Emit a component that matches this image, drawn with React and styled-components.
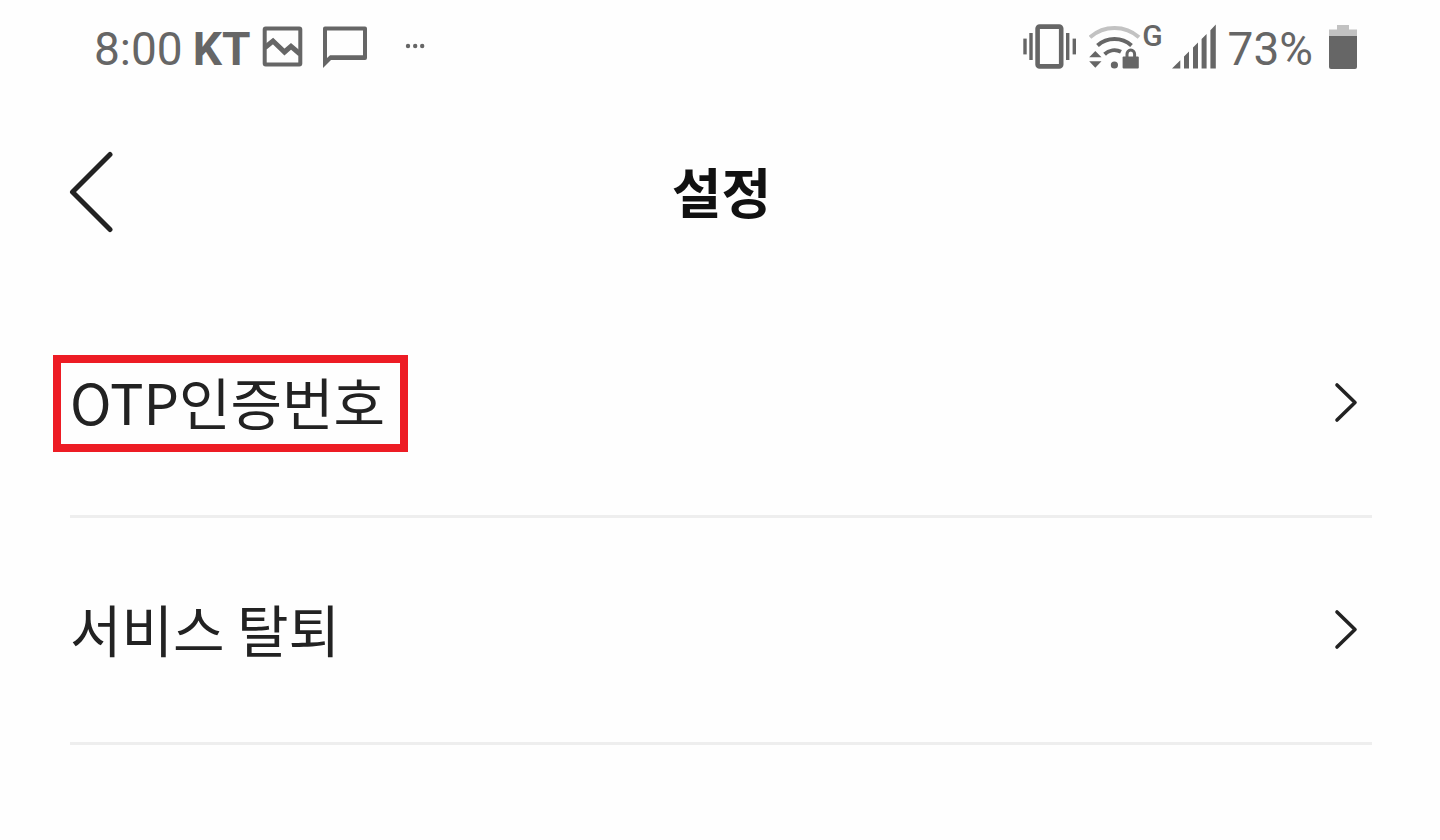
import React from "react";
import styled, { createGlobalStyle } from "styled-components";

const GlobalStyle = createGlobalStyle`
  * {
    box-sizing: border-box;
  }
  body {
    margin: 0;
    background: #fefefe;
    color: #222;
    font-family: "Noto Sans CJK KR", sans-serif;
  }
`;

const StatusBarStyled = styled.div`
  display: flex;
  justify-content: space-between;
  height: 92px;
  padding: 0 83px 0 94px;
  color: #666;
  font-family: Roboto, sans-serif;
  svg {
    display: block;
    flex: none;
  }
`;

const StatusGroup = styled.div`
  display: flex;
  align-items: center;
  gap: ${(props) => props.$gap}px;
`;

const StatusText = styled.span`
  padding-top: 6px;
  font-size: 46px;
  line-height: 54px;
  font-weight: ${(props) => (props.$bold ? 700 : 400)};
`;

const NetworkStyled = styled.div`
  display: flex;
  align-items: flex-start;
  span {
    font-size: 30px;
    line-height: 28px;
    font-weight: 500;
  }
`;

const HeaderStyled = styled.header`
  display: grid;
  grid-template-columns: 44px 1fr 44px;
  align-items: center;
  height: 199px;
  padding: 0 66px 0 69px;
`;

const BackButton = styled.button`
  padding: 0;
  border: 0;
  background: none;
  color: #222;
  cursor: pointer;
  svg {
    display: block;
  }
`;

const Title = styled.h1`
  margin: 0;
  padding-bottom: 2px;
  color: #111;
  font-size: 54px;
  line-height: 76px;
  font-weight: 700;
  text-align: center;
`;

const MenuList = styled.ul`
  margin: 0 68px 0 70px;
  padding: 0;
  list-style: none;
`;

const MenuItem = styled.li`
  border-bottom: 3px solid #eee;
`;

const MenuLink = styled.a`
  display: flex;
  align-items: center;
  justify-content: space-between;
  height: 224px;
  padding-right: 14px;
  color: inherit;
  text-decoration: none;
`;

const MenuLabel = styled.span`
  padding-bottom: 6px;
  font-size: 56px;
  line-height: 75px;
  ${(props) =>
    props.$marked &&
    `
    margin-left: -17px;
    padding-left: 9px;
    padding-right: 15px;
    border: 8px solid #ed1c24;
  `}
`;

const menus = [
  { id: "otp", label: "OTP인증번호", marked: true },
  { id: "leave", label: "서비스 탈퇴" },
];

function ImageIcon() {
  return (
    <svg width="41" height="48" viewBox="262 22 41 48" fill="none" stroke="currentColor" strokeWidth="4">
      <rect x="264.7" y="28.4" width="35.6" height="36" rx="1" />
      <path d="M265 47.5L273 41L284.5 52L291 46.3L300 54" strokeWidth="5" />
    </svg>
  );
}

function ChatIcon() {
  return (
    <svg width="46" height="48" viewBox="322 22 46 48" fill="currentColor">
      <path
        fillRule="evenodd"
        d="M325 26.4H365a2 2 0 0 1 2 2V58a2 2 0 0 1-2 2H331L323 68V28.4a2 2 0 0 1 2-2zM327 30.4V58L330 55.3H363V30.4z"
      />
    </svg>
  );
}

function DotsIcon() {
  return (
    <svg width="20" height="48" viewBox="405 22 20 48" fill="currentColor">
      <circle cx="408" cy="46" r="2.2" />
      <circle cx="415.2" cy="46" r="2.2" />
      <circle cx="422.2" cy="46" r="2.2" />
    </svg>
  );
}

function VibrateIcon() {
  return (
    <svg width="54" height="48" viewBox="1023 22 54 48" fill="currentColor">
      <rect x="1037.6" y="26.6" width="23.6" height="39.8" rx="2" fill="none" stroke="currentColor" strokeWidth="4.6" />
      <rect x="1023.3" y="38.6" width="3.4" height="15.8" />
      <rect x="1029.3" y="33" width="3.4" height="27" />
      <rect x="1066" y="33" width="3.4" height="27" />
      <rect x="1072.6" y="38.6" width="3.4" height="15.8" />
    </svg>
  );
}

function WifiIcon() {
  return (
    <svg width="53" height="48" viewBox="1089 22 53 48" fill="currentColor">
      <g fill="none" stroke="currentColor" strokeWidth="4">
        <path d="M1090 37.3A37 37 0 0 1 1139 37.3" stroke="#c2c2c2" />
        <path d="M1097.5 45.5A25.5 25.5 0 0 1 1131.5 45.5" />
        <path d="M1104.6 54.2A14.5 14.5 0 0 1 1121 51.8" />
        <path d="M1127 58V54a3.8 4 0 0 1 7.6 0V58" strokeWidth="3" />
      </g>
      <circle cx="1114.4" cy="65" r="3.6" />
      <path d="M1095.3 51L1101.5 57.2H1089.2zM1089.2 61.3H1101.5L1095.3 67.8z" />
      <rect x="1122.6" y="56.6" width="16.2" height="12" rx="1" />
    </svg>
  );
}

function SignalIcon() {
  return (
    <svg width="44" height="48" viewBox="1171 22 44 48" fill="currentColor">
      <path d="M1171 68.6L1179.3 60.3V68.6zM1183 56.6L1188 51.6V68.6H1183zM1192 47.6L1197 42.6V68.6H1192zM1200.6 39L1205.6 34V68.6H1200.6zM1209.4 30.2L1214.8 24.6V68.6H1209.4z" />
    </svg>
  );
}

function BatteryIcon() {
  return (
    <svg width="28" height="48" viewBox="1329 22 28 48">
      <path d="M1337 25H1349V29.4H1357V36H1329V29.4H1337z" fill="#c2c2c2" />
      <path d="M1329 36H1357V67a2 2 0 0 1-2 2H1331a2 2 0 0 1-2-2z" fill="currentColor" />
    </svg>
  );
}

function ChevronIcon() {
  return (
    <svg width="24" height="42" viewBox="0 0 24 42" fill="none">
      <path d="M3 3L21 20.5L3 38" stroke="#222" strokeWidth="3.6" strokeLinecap="round" strokeLinejoin="round" />
    </svg>
  );
}

function StatusBar() {
  return (
    <StatusBarStyled>
      <StatusGroup $gap={12}>
        <StatusGroup $gap={10}>
          <StatusText>8:00</StatusText>
          <StatusText $bold>KT</StatusText>
        </StatusGroup>
        <StatusGroup $gap={19}>
          <ImageIcon />
          <StatusGroup $gap={37}>
            <ChatIcon />
            <DotsIcon />
          </StatusGroup>
        </StatusGroup>
      </StatusGroup>
      <StatusGroup $gap={16}>
        <StatusGroup $gap={12}>
          <VibrateIcon />
          <StatusGroup $gap={9}>
            <NetworkStyled>
              <WifiIcon />
              <span>G</span>
            </NetworkStyled>
            <SignalIcon />
          </StatusGroup>
          <StatusText>73%</StatusText>
        </StatusGroup>
        <BatteryIcon />
      </StatusGroup>
    </StatusBarStyled>
  );
}

export default function App() {
  return (
    <>
      <GlobalStyle />
      <StatusBar />
      <HeaderStyled>
        <BackButton type="button" aria-label="뒤로">
          <svg width="44" height="82" viewBox="0 0 44 82" fill="none">
            <path
              d="M41 3.5L3.5 41L41 78.5"
              stroke="currentColor"
              strokeWidth="5"
              strokeLinecap="round"
              strokeLinejoin="round"
            />
          </svg>
        </BackButton>
        <Title>설정</Title>
      </HeaderStyled>
      <main>
        <MenuList>
          {menus.map((menu) => (
            <MenuItem key={menu.id}>
              <MenuLink href={`#${menu.id}`}>
                <MenuLabel $marked={menu.marked}>{menu.label}</MenuLabel>
                <ChevronIcon />
              </MenuLink>
            </MenuItem>
          ))}
        </MenuList>
      </main>
    </>
  );
}
